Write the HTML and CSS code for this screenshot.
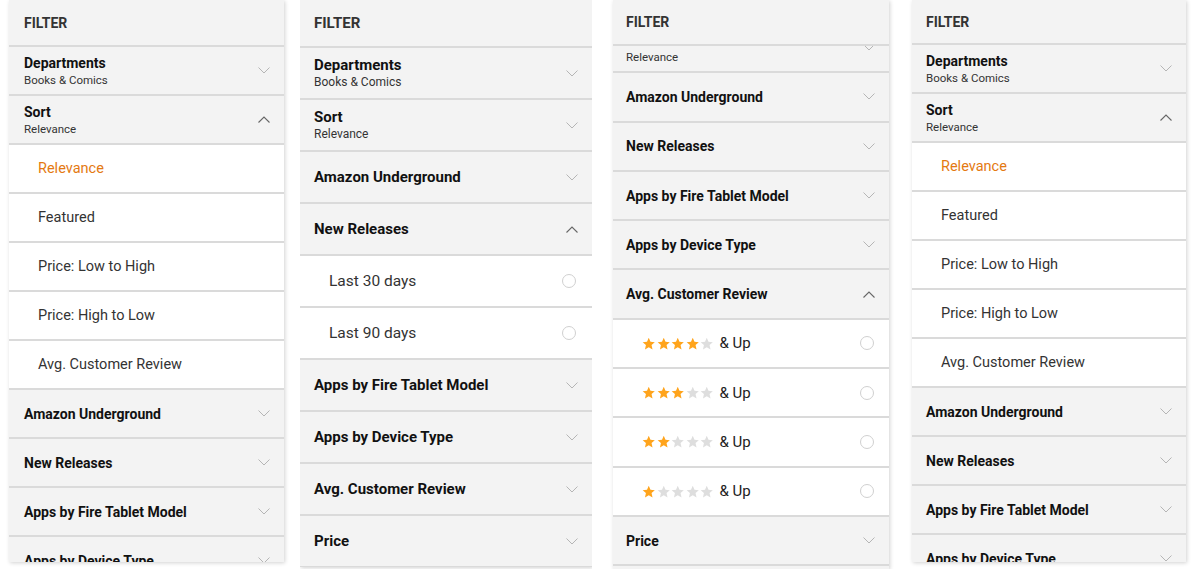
FILE: index.html
```html
<!DOCTYPE html>
<html lang="en">
<head>
    <meta charset="UTF-8">
    <title>Filter Screens</title>
    <link rel="stylesheet" href="styles.css">
</head>
<body>
    <svg class="defs" width="0" height="0">
        <symbol id="star" viewBox="0 0 24 24">
            <path d="M12 1.5l3.1 7.1 7.7.7-5.8 5.1 1.7 7.6-6.7-4-6.7 4 1.7-7.6-5.8-5.1 7.7-.7z"/>
        </symbol>
        <symbol id="down" viewBox="0 0 12 7">
            <polyline points="0.5,0.5 6,6 11.5,0.5" fill="none" stroke="currentColor" stroke-width="1"/>
        </symbol>
        <symbol id="up" viewBox="0 0 12 7">
            <polyline points="0.5,6.5 6,1 11.5,6.5" fill="none" stroke="currentColor" stroke-width="1.1"/>
        </symbol>
    </svg>

    <div class="screens">

        <!-- Screen 1: sort expanded -->
        <div class="panel p1">
            <div class="head">FILTER</div>
            <div class="scroll">
                <div class="row"><div><div class="title">Departments</div><div class="sub">Books &amp; Comics</div></div><svg class="chev"><use href="#down"/></svg></div>
                <div class="row"><div><div class="title">Sort</div><div class="sub">Relevance</div></div><svg class="chev open"><use href="#up"/></svg></div>
                <div class="row option selected">Relevance</div>
                <div class="row option">Featured</div>
                <div class="row option">Price: Low to High</div>
                <div class="row option">Price: High to Low</div>
                <div class="row option">Avg. Customer Review</div>
                <div class="row"><div class="title">Amazon Underground</div><svg class="chev"><use href="#down"/></svg></div>
                <div class="row"><div class="title">New Releases</div><svg class="chev"><use href="#down"/></svg></div>
                <div class="row"><div class="title">Apps by Fire Tablet Model</div><svg class="chev"><use href="#down"/></svg></div>
                <div class="row"><div class="title">Apps by Device Type</div><svg class="chev"><use href="#down"/></svg></div>
            </div>
        </div>

        <!-- Screen 2: new releases expanded -->
        <div class="col2">
            <div class="panel p2">
                <div class="head">FILTER</div>
                <div class="scroll">
                    <div class="row"><div><div class="title">Departments</div><div class="sub">Books &amp; Comics</div></div><svg class="chev"><use href="#down"/></svg></div>
                    <div class="row"><div><div class="title">Sort</div><div class="sub">Relevance</div></div><svg class="chev"><use href="#down"/></svg></div>
                    <div class="row"><div class="title">Amazon Underground</div><svg class="chev"><use href="#down"/></svg></div>
                    <div class="row"><div class="title">New Releases</div><svg class="chev open"><use href="#up"/></svg></div>
                    <div class="row option">Last 30 days<span class="radio"></span></div>
                    <div class="row option">Last 90 days<span class="radio"></span></div>
                    <div class="row"><div class="title">Apps by Fire Tablet Model</div><svg class="chev"><use href="#down"/></svg></div>
                    <div class="row"><div class="title">Apps by Device Type</div><svg class="chev"><use href="#down"/></svg></div>
                    <div class="row"><div class="title">Avg. Customer Review</div><svg class="chev"><use href="#down"/></svg></div>
                    <div class="row"><div class="title">Price</div><svg class="chev"><use href="#down"/></svg></div>
                </div>
            </div>
            <div class="behind">Free</div>
        </div>

        <!-- Screen 3: reviews expanded, list scrolled -->
        <div class="panel p3">
            <div class="head">FILTER</div>
            <div class="scroll">
                <div class="list scrolled">
                    <div class="row"><div><div class="title">Sort</div><div class="sub">Relevance</div></div><svg class="chev"><use href="#down"/></svg></div>
                    <div class="row"><div class="title">Amazon Underground</div><svg class="chev"><use href="#down"/></svg></div>
                    <div class="row"><div class="title">New Releases</div><svg class="chev"><use href="#down"/></svg></div>
                    <div class="row"><div class="title">Apps by Fire Tablet Model</div><svg class="chev"><use href="#down"/></svg></div>
                    <div class="row"><div class="title">Apps by Device Type</div><svg class="chev"><use href="#down"/></svg></div>
                    <div class="row"><div class="title">Avg. Customer Review</div><svg class="chev open"><use href="#up"/></svg></div>
                    <div class="row option">
                        <div class="rating">
                            <span class="stars"><svg class="on"><use href="#star"/></svg><svg class="on"><use href="#star"/></svg><svg class="on"><use href="#star"/></svg><svg class="on"><use href="#star"/></svg><svg><use href="#star"/></svg></span>&amp; Up
                        </div>
                        <span class="radio"></span>
                    </div>
                    <div class="row option">
                        <div class="rating">
                            <span class="stars"><svg class="on"><use href="#star"/></svg><svg class="on"><use href="#star"/></svg><svg class="on"><use href="#star"/></svg><svg><use href="#star"/></svg><svg><use href="#star"/></svg></span>&amp; Up
                        </div>
                        <span class="radio"></span>
                    </div>
                    <div class="row option">
                        <div class="rating">
                            <span class="stars"><svg class="on"><use href="#star"/></svg><svg class="on"><use href="#star"/></svg><svg><use href="#star"/></svg><svg><use href="#star"/></svg><svg><use href="#star"/></svg></span>&amp; Up
                        </div>
                        <span class="radio"></span>
                    </div>
                    <div class="row option">
                        <div class="rating">
                            <span class="stars"><svg class="on"><use href="#star"/></svg><svg><use href="#star"/></svg><svg><use href="#star"/></svg><svg><use href="#star"/></svg><svg><use href="#star"/></svg></span>&amp; Up
                        </div>
                        <span class="radio"></span>
                    </div>
                    <div class="row"><div class="title">Price</div><svg class="chev"><use href="#down"/></svg></div>
                    <div class="row"><div class="title">&nbsp;</div></div>
                </div>
            </div>
        </div>

        <!-- Screen 4: same as screen 1 -->
        <div class="panel p4">
            <div class="head">FILTER</div>
            <div class="scroll">
                <div class="row"><div><div class="title">Departments</div><div class="sub">Books &amp; Comics</div></div><svg class="chev"><use href="#down"/></svg></div>
                <div class="row"><div><div class="title">Sort</div><div class="sub">Relevance</div></div><svg class="chev open"><use href="#up"/></svg></div>
                <div class="row option selected">Relevance</div>
                <div class="row option">Featured</div>
                <div class="row option">Price: Low to High</div>
                <div class="row option">Price: High to Low</div>
                <div class="row option">Avg. Customer Review</div>
                <div class="row"><div class="title">Amazon Underground</div><svg class="chev"><use href="#down"/></svg></div>
                <div class="row"><div class="title">New Releases</div><svg class="chev"><use href="#down"/></svg></div>
                <div class="row"><div class="title">Apps by Fire Tablet Model</div><svg class="chev"><use href="#down"/></svg></div>
                <div class="row"><div class="title">Apps by Device Type</div><svg class="chev"><use href="#down"/></svg></div>
            </div>
        </div>

    </div>
</body>
</html>
```

FILE: styles.css
```css
body {
    margin: 0;
    background-color: #fff;
    font-family: Roboto, "Liberation Sans", Arial, sans-serif;
    color: #111;
    overflow: hidden;
}
.defs {
    position: absolute;
}
.screens {
    display: flex;
    align-items: flex-start;
    padding-left: 9px;
    height: 569px;
}
.panel {
    display: flex;
    flex-direction: column;
    background-color: #f3f3f3;
    box-shadow: 1px 1px 4px rgba(0, 0, 0, 0.18);
    --row: 49px;
    --head: 47px;
    --title: 14px;
    --sub: 11.5px;
    --opt: 14.5px;
}
.p1 {
    width: 275px;
    height: 562px;
}
.col2 {
    margin-left: 16px;
    width: 292px;
    height: 569px;
    overflow: hidden;
}
.p2 {
    width: 292px;
    height: 567px;
    --row: 52px;
    --head: 48px;
    --title: 15px;
    --sub: 12px;
    --opt: 15.5px;
}
.p3 {
    margin-left: 21px;
    width: 276px;
    height: 569px;
    --row: 49.3px;
    --head: 46px;
}
.p4 {
    margin-left: 23px;
    width: 274px;
    height: 562px;
    --head: 45px;
}
.head {
    flex: none;
    height: var(--head);
    box-sizing: border-box;
    padding: 0 15px;
    display: flex;
    align-items: center;
    border-bottom: 2px solid #dadada;
    font-size: var(--title);
    font-weight: bold;
    color: #333;
}
.p2 .head, .p4 .head {
    padding-left: 14px;
}
.p3 .head {
    padding-left: 13px;
}
.scroll {
    flex: 1;
    overflow: hidden;
}
.list.scrolled {
    margin-top: -22px;
}
.row {
    height: var(--row);
    box-sizing: border-box;
    display: flex;
    align-items: center;
    justify-content: space-between;
    padding: 0 14px 0 15px;
    border-bottom: 2px solid #dadada;
    background-color: #f3f3f3;
}
.p2 .row, .p4 .row {
    padding-left: 14px;
}
.p3 .row {
    padding-left: 13px;
}
.title {
    font-size: var(--title);
    font-weight: bold;
    color: #111;
    line-height: 18px;
}
.sub {
    font-size: var(--sub);
    color: #333;
    line-height: 16px;
}
.row.option {
    background-color: #fff;
    padding-left: 29px !important;
    font-size: var(--opt);
    color: #333;
}
.row.option.selected {
    color: #e47911;
}
.chev {
    width: 12px;
    height: 7px;
    color: #b5b5b5;
    flex: none;
}
.chev.open {
    color: #666;
}
.radio {
    width: 12px;
    height: 12px;
    border: 1px solid #d0d0d0;
    border-radius: 50%;
    background-color: #fff;
    flex: none;
    margin-right: 1px;
}
.p2 .radio {
    margin-right: 2px;
}
.rating {
    display: flex;
    align-items: center;
    font-size: 15px;
    color: #222;
}
.stars {
    display: flex;
    gap: 1px;
    margin-right: 6px;
}
.stars svg {
    width: 13.5px;
    height: 13.5px;
    fill: #dedede;
}
.stars svg.on {
    fill: #ffa41c;
}
.behind {
    padding: 1px 0 0 50px;
    font-size: 16px;
    font-weight: bold;
    color: #c0392b;
    line-height: 16px;
}
```
